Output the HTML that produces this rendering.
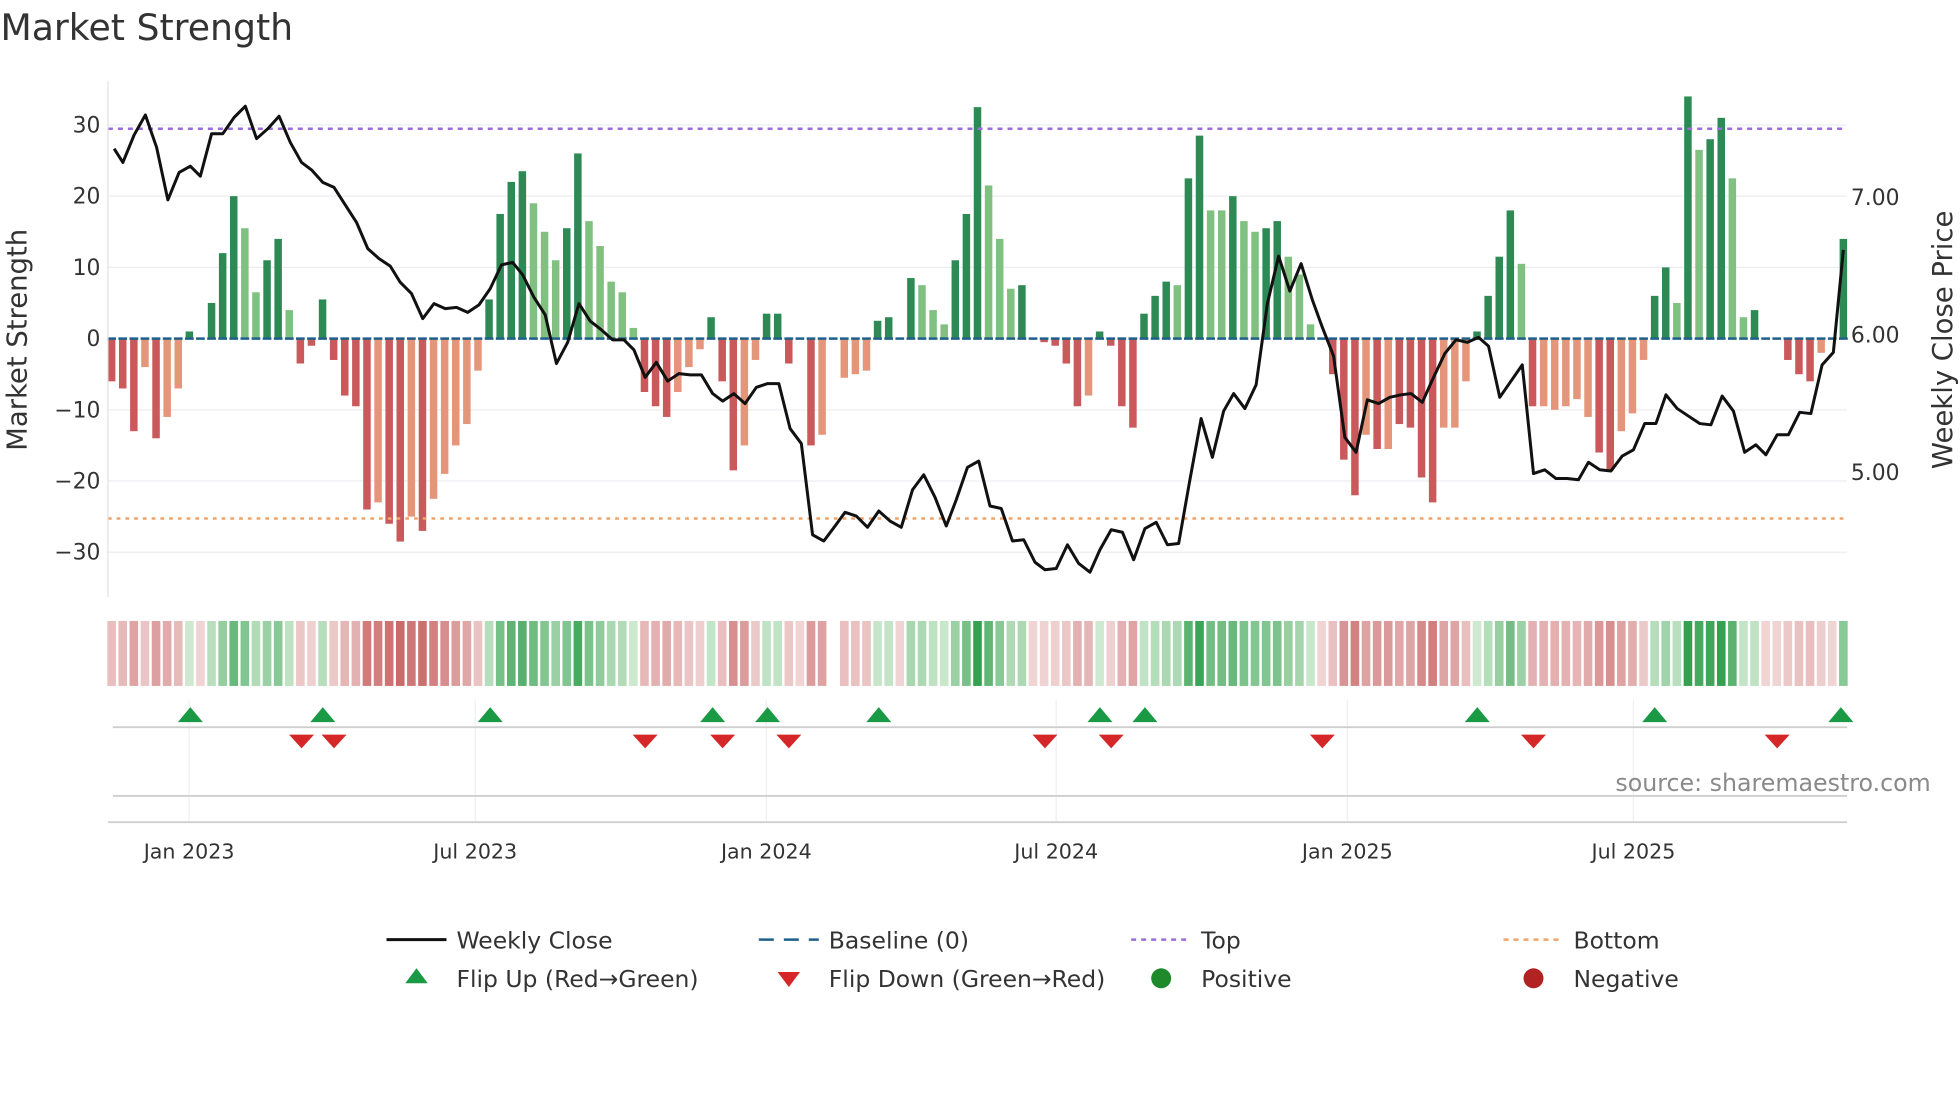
<!DOCTYPE html>
<html><head><meta charset="utf-8"><style>
html,body{margin:0;padding:0;background:#fff;}
svg{display:block;font-family:"DejaVu Sans","Liberation Sans",sans-serif;}
</style></head><body>
<svg id="s" width="1960" height="1102" viewBox="0 0 1568 882" xmlns="http://www.w3.org/2000/svg">
<rect width="1568" height="882" fill="#fff"/>
<text x="0" y="32" font-size="29" fill="#333">Market Strength</text>
<g id="grid" stroke="#eceef2" stroke-width="1"></g>
<g id="bars"></g>
<line x1="86" y1="103" x2="1478" y2="103" stroke="#9b6ddb" stroke-width="2" stroke-dasharray="4,4"/>
<line x1="86" y1="415" x2="1478" y2="415" stroke="#f0a46a" stroke-width="2" stroke-dasharray="3,4"/>
<polyline id="price" fill="none" stroke="#111" stroke-width="2.4" stroke-linejoin="round"/>
<line x1="86" y1="65" x2="86" y2="478" stroke="#e3e3e3" stroke-width="1"/>
<g font-size="17.5" fill="#333" text-anchor="end">
<text x="80" y="106">30</text><text x="80" y="163">20</text><text x="80" y="220">10</text><text x="80" y="277">0</text>
<text x="80" y="334">−10</text><text x="80" y="391">−20</text><text x="80" y="448">−30</text>
</g>
<g font-size="17.5" fill="#333">
<text x="1481" y="164">7.00</text><text x="1481" y="274">6.00</text><text x="1481" y="384">5.00</text>
</g>
<text transform="translate(21,272) rotate(-90)" font-size="22" fill="#333" text-anchor="middle">Market Strength</text>
<text transform="translate(1562,272) rotate(-90)" font-size="22" fill="#333" text-anchor="middle">Weekly Close Price</text>
<g id="heat"></g>
<g stroke="#eef0f3" stroke-width="1">
<line x1="151" y1="560" x2="151" y2="658"/><line x1="380" y1="560" x2="380" y2="658"/><line x1="613" y1="560" x2="613" y2="658"/>
<line x1="845" y1="560" x2="845" y2="658"/><line x1="1078" y1="560" x2="1078" y2="658"/><line x1="1307" y1="560" x2="1307" y2="658"/>
</g>
<line x1="90" y1="582" x2="1478" y2="582" stroke="#cfcfcf" stroke-width="1.5"/>
<line x1="90" y1="637" x2="1478" y2="637" stroke="#cfcfcf" stroke-width="1.5"/>
<line x1="86" y1="658" x2="1478" y2="658" stroke="#cfcfcf" stroke-width="1.5"/>
<g id="mk"></g>
<text x="1545" y="633" font-size="19" fill="#8a8a8a" text-anchor="end">source: sharemaestro.com</text>
<g font-size="16.5" fill="#333" text-anchor="middle">
<text x="151" y="687">Jan 2023</text><text x="380" y="687">Jul 2023</text><text x="613" y="687">Jan 2024</text>
<text x="845" y="687">Jul 2024</text><text x="1078" y="687">Jan 2025</text><text x="1307" y="687">Jul 2025</text>
</g>
<g font-size="18.8" fill="#333">
<line x1="309" y1="752" x2="357" y2="752" stroke="#111" stroke-width="2.4"/>
<text x="365" y="759">Weekly Close</text>
<line x1="607" y1="752" x2="655" y2="752" stroke="#1f5f8b" stroke-width="2" stroke-dasharray="12,8"/>
<text x="663" y="759">Baseline (0)</text>
<line x1="905" y1="752" x2="953" y2="752" stroke="#9b6ddb" stroke-width="2" stroke-dasharray="4,4"/>
<text x="961" y="759">Top</text>
<line x1="1203" y1="752" x2="1251" y2="752" stroke="#f0a46a" stroke-width="2" stroke-dasharray="4,4"/>
<text x="1259" y="759">Bottom</text>
<polygon points="324,787 342,787 333,775" fill="#1a9a44"/>
<text x="365" y="790">Flip Up (Red→Green)</text>
<polygon points="622,778 640,778 631,790" fill="#d62728"/>
<text x="663" y="790">Flip Down (Green→Red)</text>
<circle cx="929" cy="783" r="8" fill="#1f8a2c"/>
<text x="961" y="790">Positive</text>
<circle cx="1227" cy="783" r="8" fill="#b22222"/>
<text x="1259" y="790">Negative</text>
</g>
</svg>
<script>
var NS="http://www.w3.org/2000/svg";
function el(t,a,p){var e=document.createElementNS(NS,t);for(var k in a)e.setAttribute(k,a[k]);document.getElementById(p).appendChild(e);return e;}
[100,157,214,328,385,442].forEach(function(y){el("line",{x1:86,y1:y,x2:1478,y2:y},"grid");});
var v=[[-6,0],[-7,0],[-13,0],[-4,1],[-14,0],[-11,1],[-7,1],[1,0],[0,0],[5,0],[12,0],[20,0],[15.5,1],[6.5,1],[11,0],[14,0],[4,1],[-3.5,0],[-1,0],[5.5,0],[-3,0],[-8,0],[-9.5,0],[-24,0],[-23,1],[-26,0],[-28.5,0],[-25,1],[-27,0],[-22.5,1],[-19,1],[-15,1],[-12,1],[-4.5,1],[5.5,0],[17.5,0],[22,0],[23.5,0],[19,1],[15,1],[11,1],[15.5,0],[26,0],[16.5,1],[13,1],[8,1],[6.5,1],[1.5,1],[-7.5,0],[-9.5,0],[-11,0],[-7.5,1],[-4,1],[-1.5,1],[3,0],[-6,0],[-18.5,0],[-15,1],[-3,1],[3.5,0],[3.5,0],[-3.5,0],[0,0],[-15,0],[-13.5,1],[0,0],[-5.5,1],[-5,1],[-4.5,1],[2.5,0],[3,0],[0,0],[8.5,0],[7.5,1],[4,1],[2,1],[11,0],[17.5,0],[32.5,0],[21.5,1],[14,1],[7,1],[7.5,0],[0,0],[-0.5,0],[-1,0],[-3.5,0],[-9.5,0],[-8,1],[1,0],[-1,0],[-9.5,0],[-12.5,0],[3.5,0],[6,0],[8,0],[7.5,1],[22.5,0],[28.5,0],[18,1],[18,1],[20,0],[16.5,1],[15,1],[15.5,0],[16.5,0],[11.5,1],[9,1],[2,1],[0,0],[-5,0],[-17,0],[-22,0],[-13.5,1],[-15.5,0],[-15.5,1],[-12,0],[-12.5,0],[-19.5,0],[-23,0],[-12.5,1],[-12.5,1],[-6,1],[1,0],[6,0],[11.5,0],[18,0],[10.5,1],[-9.5,0],[-9.5,1],[-10,1],[-9.5,1],[-8.5,1],[-11,1],[-16,0],[-18.5,0],[-13,1],[-10.5,1],[-3,1],[6,0],[10,0],[5,1],[34,0],[26.5,1],[28,0],[31,0],[22.5,1],[3,1],[4,0],[0,0],[0,0],[-3,0],[-5,0],[-6,0],[-2,1],[0,0],[14,0]];
var n=v.length,x0=89,dx=(1475-89)/(n-1),bw=6;
function lerp(a,b,t){return Math.round(a+(b-a)*t);}
function mix(c1,c2,t){return "rgb("+lerp(c1[0],c2[0],t)+","+lerp(c1[1],c2[1],t)+","+lerp(c1[2],c2[2],t)+")";}
v.forEach(function(d,i){
 var x=x0+i*dx,val=d[0],h=Math.abs(val)*5.7,c;
 if(val>0)c=d[1]?"#80c080":"#2e8a55";else c=d[1]?"#e5967a":"#c9595a";
 if(h>0)el("rect",{x:x-bw/2,y:val>0?271-h:271,width:bw,height:h,fill:c},"bars");
 el("line",{x1:x-3.5,y1:271,x2:x+3.5,y2:271,stroke:"#1f5f8b","stroke-width":2},"bars");
 if(x>662&&x<672)return;
 var t=Math.min(1,Math.abs(val)/30),hc;
 if(val>0)hc=mix([212,236,212],[52,160,80],t);else hc=mix([240,212,212],[200,100,100],t);
 el("rect",{x:x-dx/2+1,y:497,width:dx-2,height:52,fill:hc},"heat");
});
document.getElementById("price").setAttribute("points","91,119 98,130 107,108 116,92 125,118 134,160 143,138 152,133 160,141 169,107 178,107 187,94 196,85 205,111 214,103 223,93 232,114 241,130 249,136 258,146 267,150 276,164 285,178 294,199 303,207 312,213 320,226 329,235 338,255 347,243 356,247 365,246 374,250 383,244 392,231 401,212 410,210 418,220 427,238 436,252 445,291 454,274 463,243 472,257 481,264 490,272 499,272 507,280 516,302 525,290 534,305 543,299 552,300 561,300 570,315 578,321 587,315 596,323 605,310 614,307 623,307 632,343 641,355 650,428 659,433 668,421 676,410 685,413 694,422 703,409 712,417 721,422 730,392 739,380 748,398 757,421 765,400 774,374 783,369 792,405 801,407 810,433 819,432 828,450 836,456 845,455 854,436 863,451 872,458 880,440 889,424 898,426 907,448 916,423 925,418 934,436 943,435 952,384 961,335 970,366 979,329 987,315 996,327 1005,308 1014,243 1023,205 1032,233 1041,211 1050,240 1058,262 1067,285 1076,350 1085,362 1094,320 1103,323 1112,318 1121,316 1129,315 1138,322 1147,302 1156,283 1165,272 1174,274 1183,270 1191,277 1200,318 1209,305 1218,292 1227,379 1236,376 1245,383 1254,383 1263,384 1271,370 1280,376 1289,377 1298,365 1307,360 1316,339 1325,339 1333,316 1342,327 1351,333 1360,339 1369,340 1378,317 1387,329 1396,362 1405,356 1413,364 1422,348 1431,348 1440,330 1449,331 1458,292 1467,282 1475,200");
[152,258,392,570,614,703,880,916,1182,1324,1473].forEach(function(x){el("polygon",{points:(x-10)+",578 "+(x+10)+",578 "+x+",566",fill:"#1a9a44"},"mk");});
[241,267,516,578,631,836,889,1058,1227,1422].forEach(function(x){el("polygon",{points:(x-10)+",588 "+(x+10)+",588 "+x+",599",fill:"#d62728"},"mk");});
</script>
</body></html>
